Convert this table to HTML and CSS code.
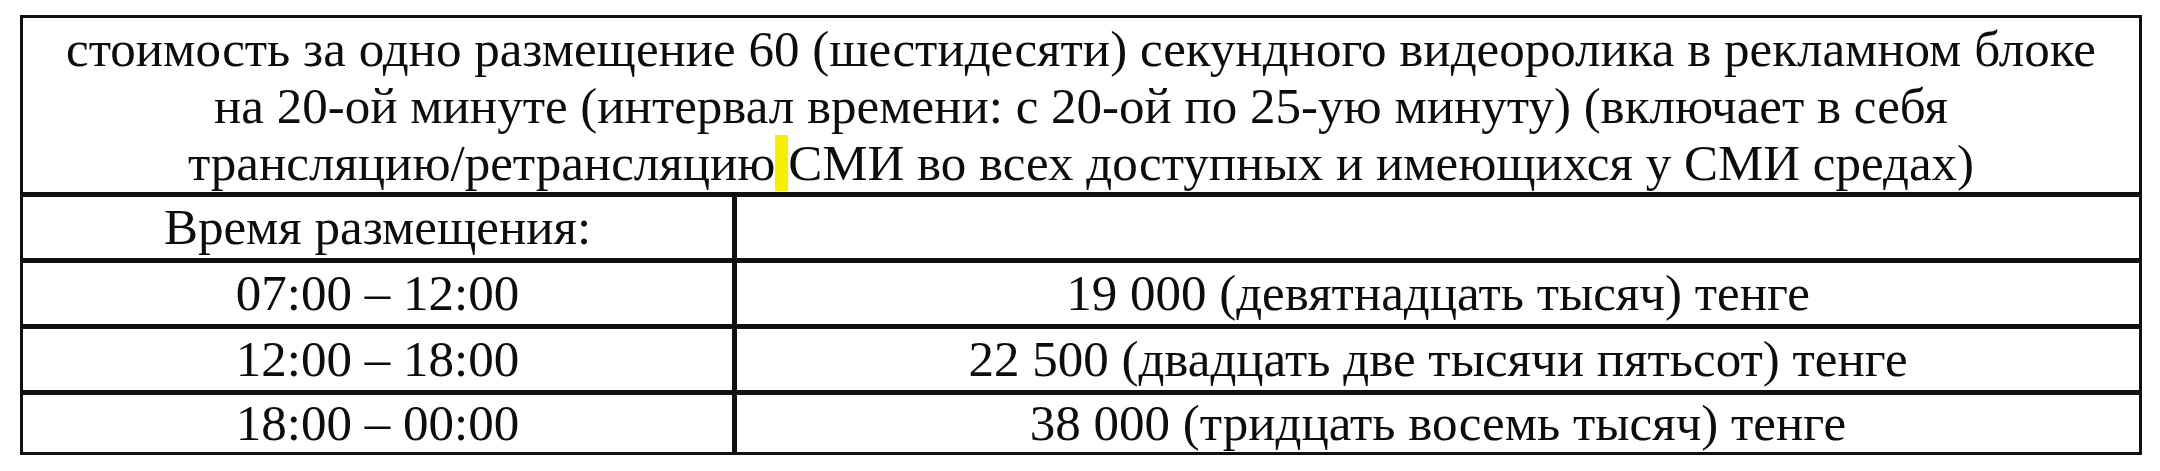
FILE: index.html
```html
<!DOCTYPE html>
<html lang="ru">
<head>
<meta charset="utf-8">
<title>Стоимость размещения</title>
<link rel="stylesheet" href="styles.css">
</head>
<body>
<div class="page">
  <table class="price">
    <colgroup>
      <col class="col-time">
      <col class="col-price">
    </colgroup>
    <tr class="head">
      <td colspan="2">стоимость за одно размещение 60 (шестидесяти) секундного видеоролика в рекламном блоке<br>на 20-ой минуте (интервал времени: с 20-ой по 25-ую минуту) (включает в себя<br>трансляцию/ретрансляцию<mark class="hl"> </mark>СМИ во всех доступных и имеющихся у СМИ средах)</td>
    </tr>
    <tr>
      <td>Время размещения:</td>
      <td></td>
    </tr>
    <tr>
      <td>07:00 – 12:00</td>
      <td>19 000 (девятнадцать тысяч) тенге</td>
    </tr>
    <tr>
      <td>12:00 – 18:00</td>
      <td>22 500 (двадцать две тысячи пятьсот) тенге</td>
    </tr>
    <tr class="last">
      <td>18:00 – 00:00</td>
      <td>38 000 (тридцать восемь тысяч) тенге</td>
    </tr>
  </table>
</div>
</body>
</html>
```
FILE: styles.css
```css
html, body {
  margin: 0;
  padding: 0;
  background: #ffffff;
}

.page {
  padding: 15px 0 0 20px;
}

.price {
  border-collapse: collapse;
  width: 2122px;
  table-layout: fixed;
  font-family: "Liberation Serif", "Times New Roman", serif;
  font-size: 51px;
  color: #0d0d0d;
  border: 3px solid #111111;
}

.col-time {
  width: 713px;
}

.price td {
  text-align: center;
  vertical-align: middle;
  line-height: 57px;
  padding: 2px 0;
  border-top: 5px solid #111111;
  border-bottom: 5px solid #111111;
  border-left: 5px solid #111111;
  border-right: 5px solid #111111;
  white-space: nowrap;
}

.price tr.head td {
  border-top: 3px solid #111111;
  padding: 3px 0 0 0;
}

.price tr.last td {
  border-bottom: 3px solid #111111;
  padding: 0;
}

.price td:first-child {
  border-left: 3px solid #111111;
}

.price td:last-child {
  border-right: 3px solid #111111;
}

.hl {
  background: #f7ef00;
  color: inherit;
}
```
